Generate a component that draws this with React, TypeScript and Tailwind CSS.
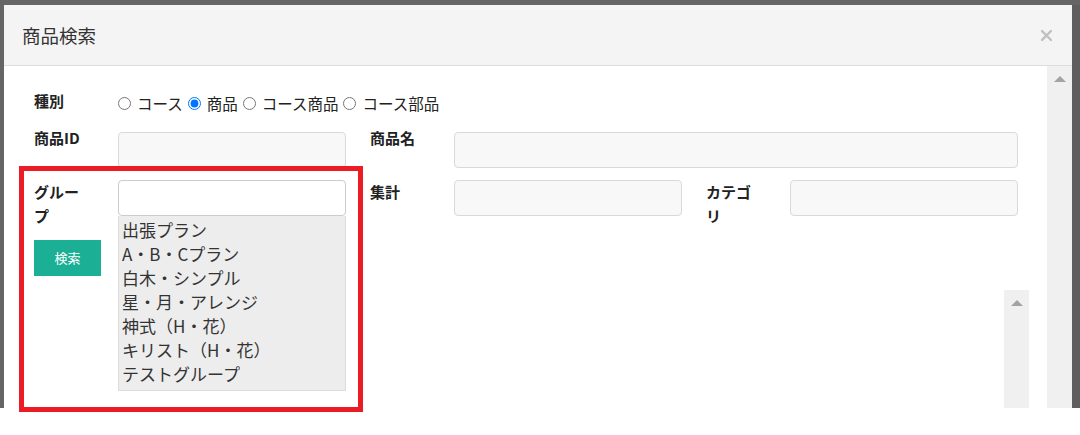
import { useState } from "react";

const font = "font-['Meiryo','Noto_Sans_CJK_JP',sans-serif]";

const groups = [
  "出張プラン",
  "A・B・Cプラン",
  "白木・シンプル",
  "星・月・アレンジ",
  "神式（H・花）",
  "キリスト（H・花）",
  "テストグループ",
];

const kinds = ["コース", "商品", "コース商品", "コース部品"];

function ScrollArrow() {
  return <div className="w-0 h-0 border-l-[6px] border-r-[6px] border-b-[6px] border-l-transparent border-r-transparent border-b-[#a3a3a3]" />;
}

function Field({ wide }: { wide?: boolean }) {
  return (
    <div
      className={`shrink-0 h-[36px] rounded-[4px] border border-[#d9d9d9] bg-[#f8f8f8] ${wide ? "w-[564px]" : "w-[228px]"}`}
    />
  );
}

export default function App() {
  const [kind, setKind] = useState("商品");

  return (
    <div className={`relative w-[1080px] h-[435px] bg-white overflow-hidden ${font} text-[#222]`}>
      {/* overlay + modal */}
      <div className="h-[408px] bg-[#656565] pt-[5px] pl-[4px] flex">
        <div className="w-[1068px] shrink-0 bg-white flex flex-col overflow-hidden">
          <div className="h-[61px] shrink-0 bg-[#f4f4f4] border-b border-[#dddddd] flex items-center justify-between pl-[18px] pr-[20px]">
            <span className="text-[18.5px] text-[#333] leading-none">商品検索</span>
            <svg width="11" height="11" viewBox="0 0 11 11" className="mt-[1px]">
              <path d="M1 1 L10 10 M10 1 L1 10" stroke="#c0c0c0" strokeWidth="2.4" strokeLinecap="square" />
            </svg>
          </div>

          <div className="flex flex-1 min-h-0">
            <div className="flex-1 pl-[30px] pt-[23px]">
              {/* 種別 */}
              <div className="flex items-center h-[24px]">
                <div className="w-[84px] shrink-0 text-[15px] font-bold leading-[24px]">種別</div>
                <div className="flex items-center text-[15.5px] text-[#222] mt-[4px]">
                  {kinds.map((k, i) => (
                    <label key={k} className={`flex items-center ${i > 0 ? "ml-[5px]" : ""}`}>
                      <input
                        type="radio"
                        name="kind"
                        checked={kind === k}
                        onChange={() => setKind(k)}
                        className="w-[13px] h-[13px] m-0 mr-[6px] accent-[#0075ff]"
                      />
                      <span className="leading-[20px]">{k}</span>
                    </label>
                  ))}
                </div>
              </div>

              {/* 商品ID / 商品名 */}
              <div className="flex mt-[19px]">
                <div className="w-[84px] shrink-0 text-[15px] font-bold leading-[24px] -mt-[6px]">商品ID</div>
                <Field />
                <div className="w-[84px] shrink-0 ml-[24px] text-[15px] font-bold leading-[24px] -mt-[6px]">商品名</div>
                <Field wide />
              </div>

              {/* グループ row */}
              <div className="flex mt-[12px]">
                <div className="w-[84px] shrink-0">
                  <div className="w-[52px] text-[15px] font-bold leading-[24px]">グループ</div>
                  <button className="mt-[12px] w-[67px] h-[36px] bg-[#1bb096] text-white text-[13px]">検索</button>
                </div>
                <div className="w-[228px] shrink-0">
                  <input className="block w-full h-[36px] rounded-[4px] border border-[#cccccc] bg-white outline-none" />
                  <div className="bg-[#ededed] border border-[#dcdcdc] border-t-0 pl-[3px] pt-[2px] pb-[4px] text-[17px] leading-[24px] text-[#333]">
                    {groups.map((g) => (
                      <div key={g} className="whitespace-nowrap">{g}</div>
                    ))}
                  </div>
                </div>
                <div className="w-[648px] shrink-0 ml-[24px]">
                  <div className="flex">
                    <div className="w-[84px] shrink-0 text-[15px] font-bold leading-[24px]">集計</div>
                    <Field />
                    <div className="w-[84px] shrink-0 ml-[24px]">
                      <div className="w-[52px] text-[15px] font-bold leading-[24px]">カテゴリ</div>
                    </div>
                    <Field />
                  </div>
                  <div className="flex justify-end -mr-[11px] mt-[62px]">
                    <div className="w-[25px] h-[140px] bg-[#f0f0f0] flex justify-center pt-[10px]">
                      <ScrollArrow />
                    </div>
                  </div>
                </div>
              </div>
            </div>

            <div className="w-[25px] shrink-0 bg-[#f0f0f0] flex justify-center pt-[10px]">
              <ScrollArrow />
            </div>
          </div>
        </div>
        <div className="flex-1 bg-[#5e5e5e]" />
      </div>

      {/* highlight box */}
      <div className="absolute left-[19px] top-[166px] w-[344px] h-[246px] border-[5px] border-[#ec1c24]" />
    </div>
  );
}
